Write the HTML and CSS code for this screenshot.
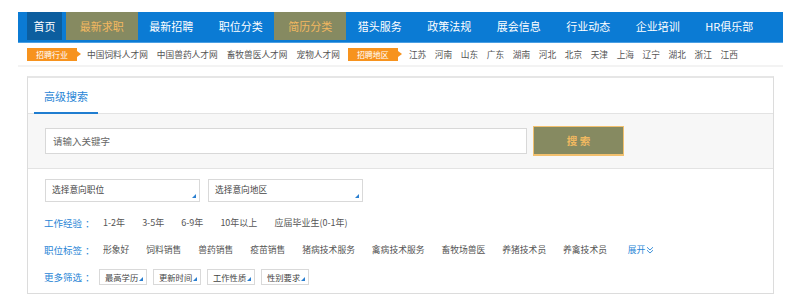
FILE: index.html
```html
<!DOCTYPE html>
<html lang="zh-CN">
<head>
<meta charset="utf-8">
<title>高级搜索</title>
<link rel="stylesheet" href="styles.css">
</head>
<body>
<div class="wrap">
  <nav class="nav">
    <a class="nav-item home">首页</a>
    <a class="nav-item olive">最新求职</a>
    <a class="nav-item">最新招聘</a>
    <a class="nav-item">职位分类</a>
    <a class="nav-item olive">简历分类</a>
    <a class="nav-item">猎头服务</a>
    <a class="nav-item">政策法规</a>
    <a class="nav-item">展会信息</a>
    <a class="nav-item">行业动态</a>
    <a class="nav-item">企业培训</a>
    <a class="nav-item">HR俱乐部</a>
  </nav>
  <div class="subbar">
    <span class="tag">招聘行业</span>
    <div class="sublinks">
      <a>中国饲料人才网</a>
      <a>中国兽药人才网</a>
      <a>畜牧兽医人才网</a>
      <a>宠物人才网</a>
    </div>
    <span class="tag">招聘地区</span>
    <div class="cities">
      <a>江苏</a><a>河南</a><a>山东</a><a>广东</a><a>湖南</a><a>河北</a><a>北京</a><a>天津</a><a>上海</a><a>辽宁</a><a>湖北</a><a>浙江</a><a>江西</a>
    </div>
  </div>

  <section class="panel">
    <div class="panel-head">
      <span class="tab">高级搜索</span>
    </div>
    <div class="search">
      <div class="search-input">请输入关键字</div>
      <button class="search-btn">搜 索</button>
    </div>
    <div class="body">
      <div class="selects">
        <div class="select">选择意向职位</div>
        <div class="select">选择意向地区</div>
      </div>
      <div class="row">
        <span class="label">工作经验<span class="colon">：</span></span>
        <div class="opts">
          <a>1-2年</a><a>3-5年</a><a>6-9年</a><a>10年以上</a><a>应届毕业生(0-1年)</a>
        </div>
      </div>
      <div class="row">
        <span class="label">职位标签<span class="colon">：</span></span>
        <div class="opts tags">
          <a>形象好</a><a>饲料销售</a><a>兽药销售</a><a>疫苗销售</a><a>猪病技术服务</a><a>禽病技术服务</a><a>畜牧场兽医</a><a>养猪技术员</a><a>养禽技术员</a>
          <a class="more">展开<svg width="8" height="8" viewBox="0 0 8 8"><path d="M1 1.2 L4 4 L7 1.2 M1 4.2 L4 7 L7 4.2" fill="none" stroke="#2a86d6" stroke-width="0.9"/></svg></a>
        </div>
      </div>
      <div class="row">
        <span class="label">更多筛选<span class="colon">：</span></span>
        <div class="filters">
          <span class="filter">最高学历</span>
          <span class="filter">更新时间</span>
          <span class="filter">工作性质</span>
          <span class="filter">性别要求</span>
        </div>
      </div>
    </div>
  </section>
</div>
</body>
</html>
```

FILE: styles.css
```css
* { box-sizing: border-box; }
body {
  margin: 0;
  background: #fff;
  font-family: "Noto Sans CJK SC", "Noto Sans", sans-serif;
  color: #555;
}
a { text-decoration: none; color: inherit; }

.wrap {
  width: 765px;
  margin: 12px 0 0 18px;
}

/* nav */
.nav {
  display: flex;
  background: #0b7bd4;
  padding: 0 0 2px 9px;
  border-bottom: 1px solid #4a9fe3;
}
.nav-item {
  height: 28px;
  line-height: 28px;
  font-size: 11px;
  color: #fff;
  padding: 0 12.75px;
  white-space: nowrap;
}
.nav-item.home {
  background: #0c5e9f;
  padding: 0 6.5px;
  margin-right: 5px;
}
.nav-item.olive {
  background: #868a61;
  color: #f3b860;
  padding: 0 14px;
  margin: 0 -1.25px;
}

/* sub bar */
.subbar {
  display: flex;
  align-items: center;
  height: 24px;
  padding-left: 9px;
  border-bottom: 2px solid #f3f3f3;
  font-size: 8.7px;
  color: #555;
}
.tag {
  position: relative;
  height: 13px;
  line-height: 13px;
  width: 50px;
  text-align: center;
  background: #f7931e;
  color: #fff;
  font-size: 8px;
  margin-right: 10px;
}
.tag::after {
  content: "";
  position: absolute;
  right: -4px;
  top: 3.5px;
  border-left: 4px solid #f7931e;
  border-top: 3px solid transparent;
  border-bottom: 3px solid transparent;
}
.sublinks {
  display: flex;
  gap: 9px;
  margin-right: 8px;
}
.cities {
  display: flex;
  gap: 8.6px;
  margin-left: 1px;
}

/* panel */
.panel {
  margin: 9px 9px 0;
  border: 1px solid #dcdcdc;
  border-top: 2px solid #e6e6e6;
  background: #fff;
}
.panel-head {
  height: 36px;
  border-bottom: 1px solid #e3e3e3;
  padding-left: 6px;
  display: flex;
}
.tab {
  width: 64px;
  text-align: center;
  font-size: 11px;
  line-height: 36px;
  color: #2a86d6;
  border-bottom: 2px solid #1f7dd0;
  margin-bottom: -1px;
}
.search {
  display: flex;
  align-items: center;
  background: #f7f7f7;
  height: 55px;
  padding-left: 17px;
  border-bottom: 1px solid #e3e3e3;
}
.search-input {
  width: 482px;
  height: 26px;
  border: 1px solid #d8d8d8;
  background: #fff;
  font-size: 9.5px;
  color: #666;
  line-height: 24px;
  padding-left: 7px;
  margin-top: -1px;
}
.search-btn {
  margin-left: 6px;
  width: 91px;
  height: 30px;
  background: #868a61;
  border: 1px solid #f2c06e;
  border-bottom-width: 2px;
  color: #f0b860;
  font-family: inherit;
  font-size: 10.5px;
  font-weight: bold;
  padding: 0;
}

.body {
  padding: 10px 0 3px 16px;
}
.selects {
  display: flex;
  gap: 8px;
  margin-bottom: 7px;
  padding-left: 1px;
}
.select {
  position: relative;
  width: 155px;
  height: 23px;
  border: 1px solid #d9d9d9;
  font-size: 8.7px;
  color: #444;
  padding: 3px 0 0 6px;
}
.select::after,
.filter::after {
  content: "";
  position: absolute;
  right: 3px;
  bottom: 3px;
  border-left: 4px solid transparent;
  border-bottom: 4px solid #2a7fd0;
}
.row {
  display: flex;
  align-items: center;
  height: 27px;
}
.label {
  width: 55px;
  font-size: 9.5px;
  color: #2a86d6;
  flex-shrink: 0;
}
.colon {
  margin-left: 3px;
}
.opts {
  display: flex;
  align-items: center;
  gap: 17px;
  padding-left: 4px;
  font-size: 9px;
  color: #555;
  white-space: nowrap;
}
.opts.tags {
  font-size: 8.8px;
  gap: 16.8px;
}
.opts .more {
  color: #2a86d6;
  margin-left: 4px;
  display: flex;
  align-items: center;
  gap: 1px;
}
.filters {
  display: flex;
  gap: 6px;
}
.filter {
  position: relative;
  width: 48px;
  height: 16px;
  line-height: 14px;
  border: 1px solid #d9d9d9;
  font-size: 8.3px;
  color: #444;
  padding-left: 5px;
}
```
